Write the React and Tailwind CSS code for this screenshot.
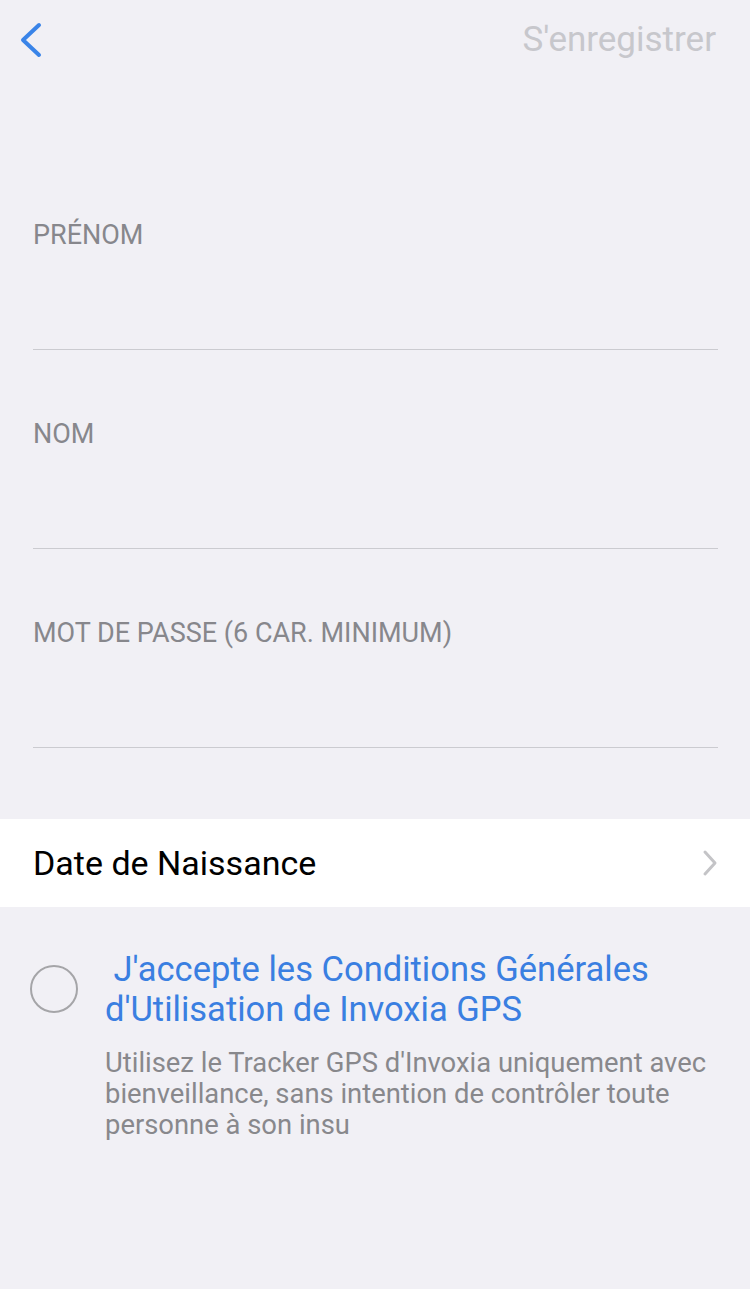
const fields = ["PRÉNOM", "NOM", "MOT DE PASSE (6 CAR. MINIMUM)"];

export default function App() {
  return (
    <div className="min-h-[1289px] w-[750px] bg-[#f1f0f5] font-['Roboto',sans-serif]">
      {/* Nav */}
      <div className="flex h-[80px] items-center justify-between pl-[16px] pr-[34px]">
        <svg width="30" height="40" viewBox="0 0 30 40" fill="none">
          <path d="M23 5 L7 20 L23 35" stroke="#3a84e8" strokeWidth="4" strokeLinecap="round" strokeLinejoin="round" />
        </svg>
        <span className="text-[35px] leading-[40px] text-[#c7c7cc]">S'enregistrer</span>
      </div>

      {/* Champs */}
      <div className="mt-[71px] flex flex-col pl-[33px] pr-[32px]">
        {fields.map((f) => (
          <div key={f} className="flex h-[199px] flex-col border-b border-[#cbcbd0]">
            <span className="mt-[69px] text-[27px] leading-[30px] text-[#87878c]">{f}</span>
          </div>
        ))}
      </div>

      {/* Date de naissance */}
      <div className="mt-[71px] flex h-[88px] items-center justify-between bg-white pl-[33px] pr-[32px]">
        <span className="text-[34px] leading-[40px] text-black">Date de Naissance</span>
        <svg width="16" height="28" viewBox="0 0 16 28" fill="none">
          <path d="M3 3 L13 14 L3 25" stroke="#c4c4c7" strokeWidth="3" strokeLinecap="round" strokeLinejoin="round" />
        </svg>
      </div>

      {/* Conditions */}
      <div className="mt-[42px] flex pl-[30px] pr-[28px]">
        <div className="mt-[16px] h-[48px] w-[48px] shrink-0 rounded-full border-2 border-[#a5a5a8]" />
        <div className="ml-[27px] flex flex-col">
          <p className="text-[34.5px] leading-[40px] text-[#3a7fe1]">
            &nbsp;J'accepte les Conditions Générales d'Utilisation de Invoxia GPS
          </p>
          <p className="mt-[19px] text-[27.4px] leading-[31px] text-[#88888c]">
            Utilisez le Tracker GPS d'Invoxia uniquement avec bienveillance, sans intention de contrôler toute personne à son insu
          </p>
        </div>
      </div>
    </div>
  );
}
